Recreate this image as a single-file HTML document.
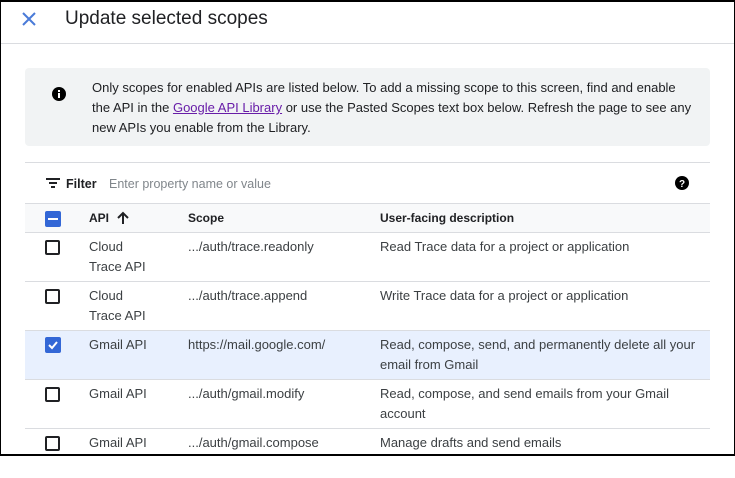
<!DOCTYPE html>
<html><head><style>
*{margin:0;padding:0;box-sizing:border-box}
body{width:735px;height:456px;overflow:hidden;background:#fff;font-family:"Liberation Sans",sans-serif;color:#3c4043;font-size:13px;position:relative}
.frame{position:absolute;left:0;top:0;width:735px;height:456px;border:1px solid #000;border-bottom:2px solid #000;border-top:2px solid #000;pointer-events:none}
.hdr{position:absolute;left:0;top:0;width:735px;height:44px;border-bottom:1px solid #dadce0}
.title{position:absolute;left:65px;top:8px;font-size:19px;color:#202124}
.info{position:absolute;left:25px;top:68px;width:685px;height:78px;background:#f1f3f4;border-radius:4px}
.info p{position:absolute;left:67px;top:10px;width:615px;white-space:nowrap;line-height:20px;font-size:13px;color:#202124}
.info a{color:#681da8;text-decoration:underline}
.line{position:absolute;left:25px;width:685px;height:1px;background:#dadce0}
.row{position:absolute;left:25px;width:685px;border-bottom:1px solid #dadce0}
.c{position:absolute;line-height:20px}
.cb{position:absolute;left:20px;width:15px;height:15px;border:2px solid #202124;border-radius:2px}
.cbon{border:none;background:#3367d6}
</style></head><body>
<div class="hdr">
<svg style="position:absolute;left:21px;top:11px" width="16" height="16" viewBox="0 0 16 16"><path d="M2 2L14 14M14 2L2 14" stroke="#4a7bd8" stroke-width="2"/></svg>
<div class="title">Update selected scopes</div>
</div>
<div class="info">
<svg style="position:absolute;left:27px;top:19px" width="14" height="14" viewBox="0 0 14 14"><circle cx="7" cy="7" r="7" fill="#000"/><rect x="6" y="6" width="2" height="5" fill="#fff"/><rect x="6" y="3" width="2" height="2" fill="#fff"/></svg>
<p>Only scopes for enabled APIs are listed below. To add a missing scope to this screen, find and enable<br>the API in the <a>Google API Library</a> or use the Pasted Scopes text box below. Refresh the page to see any<br>new APIs you enable from the Library.</p>
</div>
<div class="line" style="top:162px"></div>
<svg style="position:absolute;left:46px;top:177px" width="14" height="12" viewBox="0 0 14 12"><rect x="0" y="1" width="14" height="2" fill="#202124"/><rect x="3" y="5" width="8" height="2" fill="#202124"/><rect x="5" y="9" width="4" height="2" fill="#202124"/></svg>
<div class="c" style="left:66px;top:174px;color:#202124;font-weight:bold;font-size:12.5px">Filter</div>
<div class="c" style="left:109px;top:174px;color:#80868b;font-size:12.5px">Enter property name or value</div>
<svg style="position:absolute;left:675px;top:176px" width="14" height="14" viewBox="0 0 14 14"><circle cx="7" cy="7" r="7" fill="#000"/><text x="7" y="11" font-size="10" font-weight="bold" text-anchor="middle" fill="#fff" font-family="Liberation Sans">?</text></svg>
<div class="row" style="top:203px;height:30px;background:#f8f9fa;border-top:1px solid #dadce0">
<div class="cb cbon" style="top:7px;width:16px;height:16px"><div style="position:absolute;left:3px;top:7px;width:10px;height:2px;background:#fff"></div></div>
<div class="c" style="left:64px;top:4px;font-weight:bold;color:#202124;font-size:12px">API</div>
<svg style="position:absolute;left:92px;top:7px" width="12" height="14" viewBox="0 0 12 14"><path d="M6 13V2M1 7L6 2L11 7" stroke="#202124" stroke-width="2" fill="none"/></svg>
<div class="c" style="left:163px;top:4px;font-weight:bold;color:#202124;font-size:12px">Scope</div>
<div class="c" style="left:355px;top:4px;font-weight:bold;color:#202124;font-size:12px">User-facing description</div>
</div>
<div class="row" style="top:233px;height:49px"><div class="cb" style="top:7px"></div><div class="c" style="left:64px;top:4px">Cloud<br>Trace API</div><div class="c" style="left:163px;top:4px">.../auth/trace.readonly</div><div class="c" style="left:355px;top:4px">Read Trace data for a project or application</div></div>
<div class="row" style="top:282px;height:49px"><div class="cb" style="top:7px"></div><div class="c" style="left:64px;top:4px">Cloud<br>Trace API</div><div class="c" style="left:163px;top:4px">.../auth/trace.append</div><div class="c" style="left:355px;top:4px">Write Trace data for a project or application</div></div>
<div class="row" style="top:331px;height:49px;background:#e8f0fe"><div class="cb cbon" style="top:6px;width:16px;height:16px"><svg style="position:absolute;left:2px;top:2px" width="12" height="12" viewBox="0 0 12 12"><path d="M2 6L5 9L10 3" stroke="#fff" stroke-width="2" fill="none"/></svg></div><div class="c" style="left:64px;top:4px">Gmail API</div><div class="c" style="left:163px;top:4px">https://mail.google.com/</div><div class="c" style="left:355px;top:4px">Read, compose, send, and permanently delete all your<br>email from Gmail</div></div>
<div class="row" style="top:380px;height:49px"><div class="cb" style="top:7px"></div><div class="c" style="left:64px;top:4px">Gmail API</div><div class="c" style="left:163px;top:4px">.../auth/gmail.modify</div><div class="c" style="left:355px;top:4px">Read, compose, and send emails from your Gmail<br>account</div></div>
<div class="row" style="top:429px;height:49px;border:none"><div class="cb" style="top:7px"></div><div class="c" style="left:64px;top:4px">Gmail API</div><div class="c" style="left:163px;top:4px">.../auth/gmail.compose</div><div class="c" style="left:355px;top:4px">Manage drafts and send emails</div></div>
<div class="frame"></div>
</body></html>
